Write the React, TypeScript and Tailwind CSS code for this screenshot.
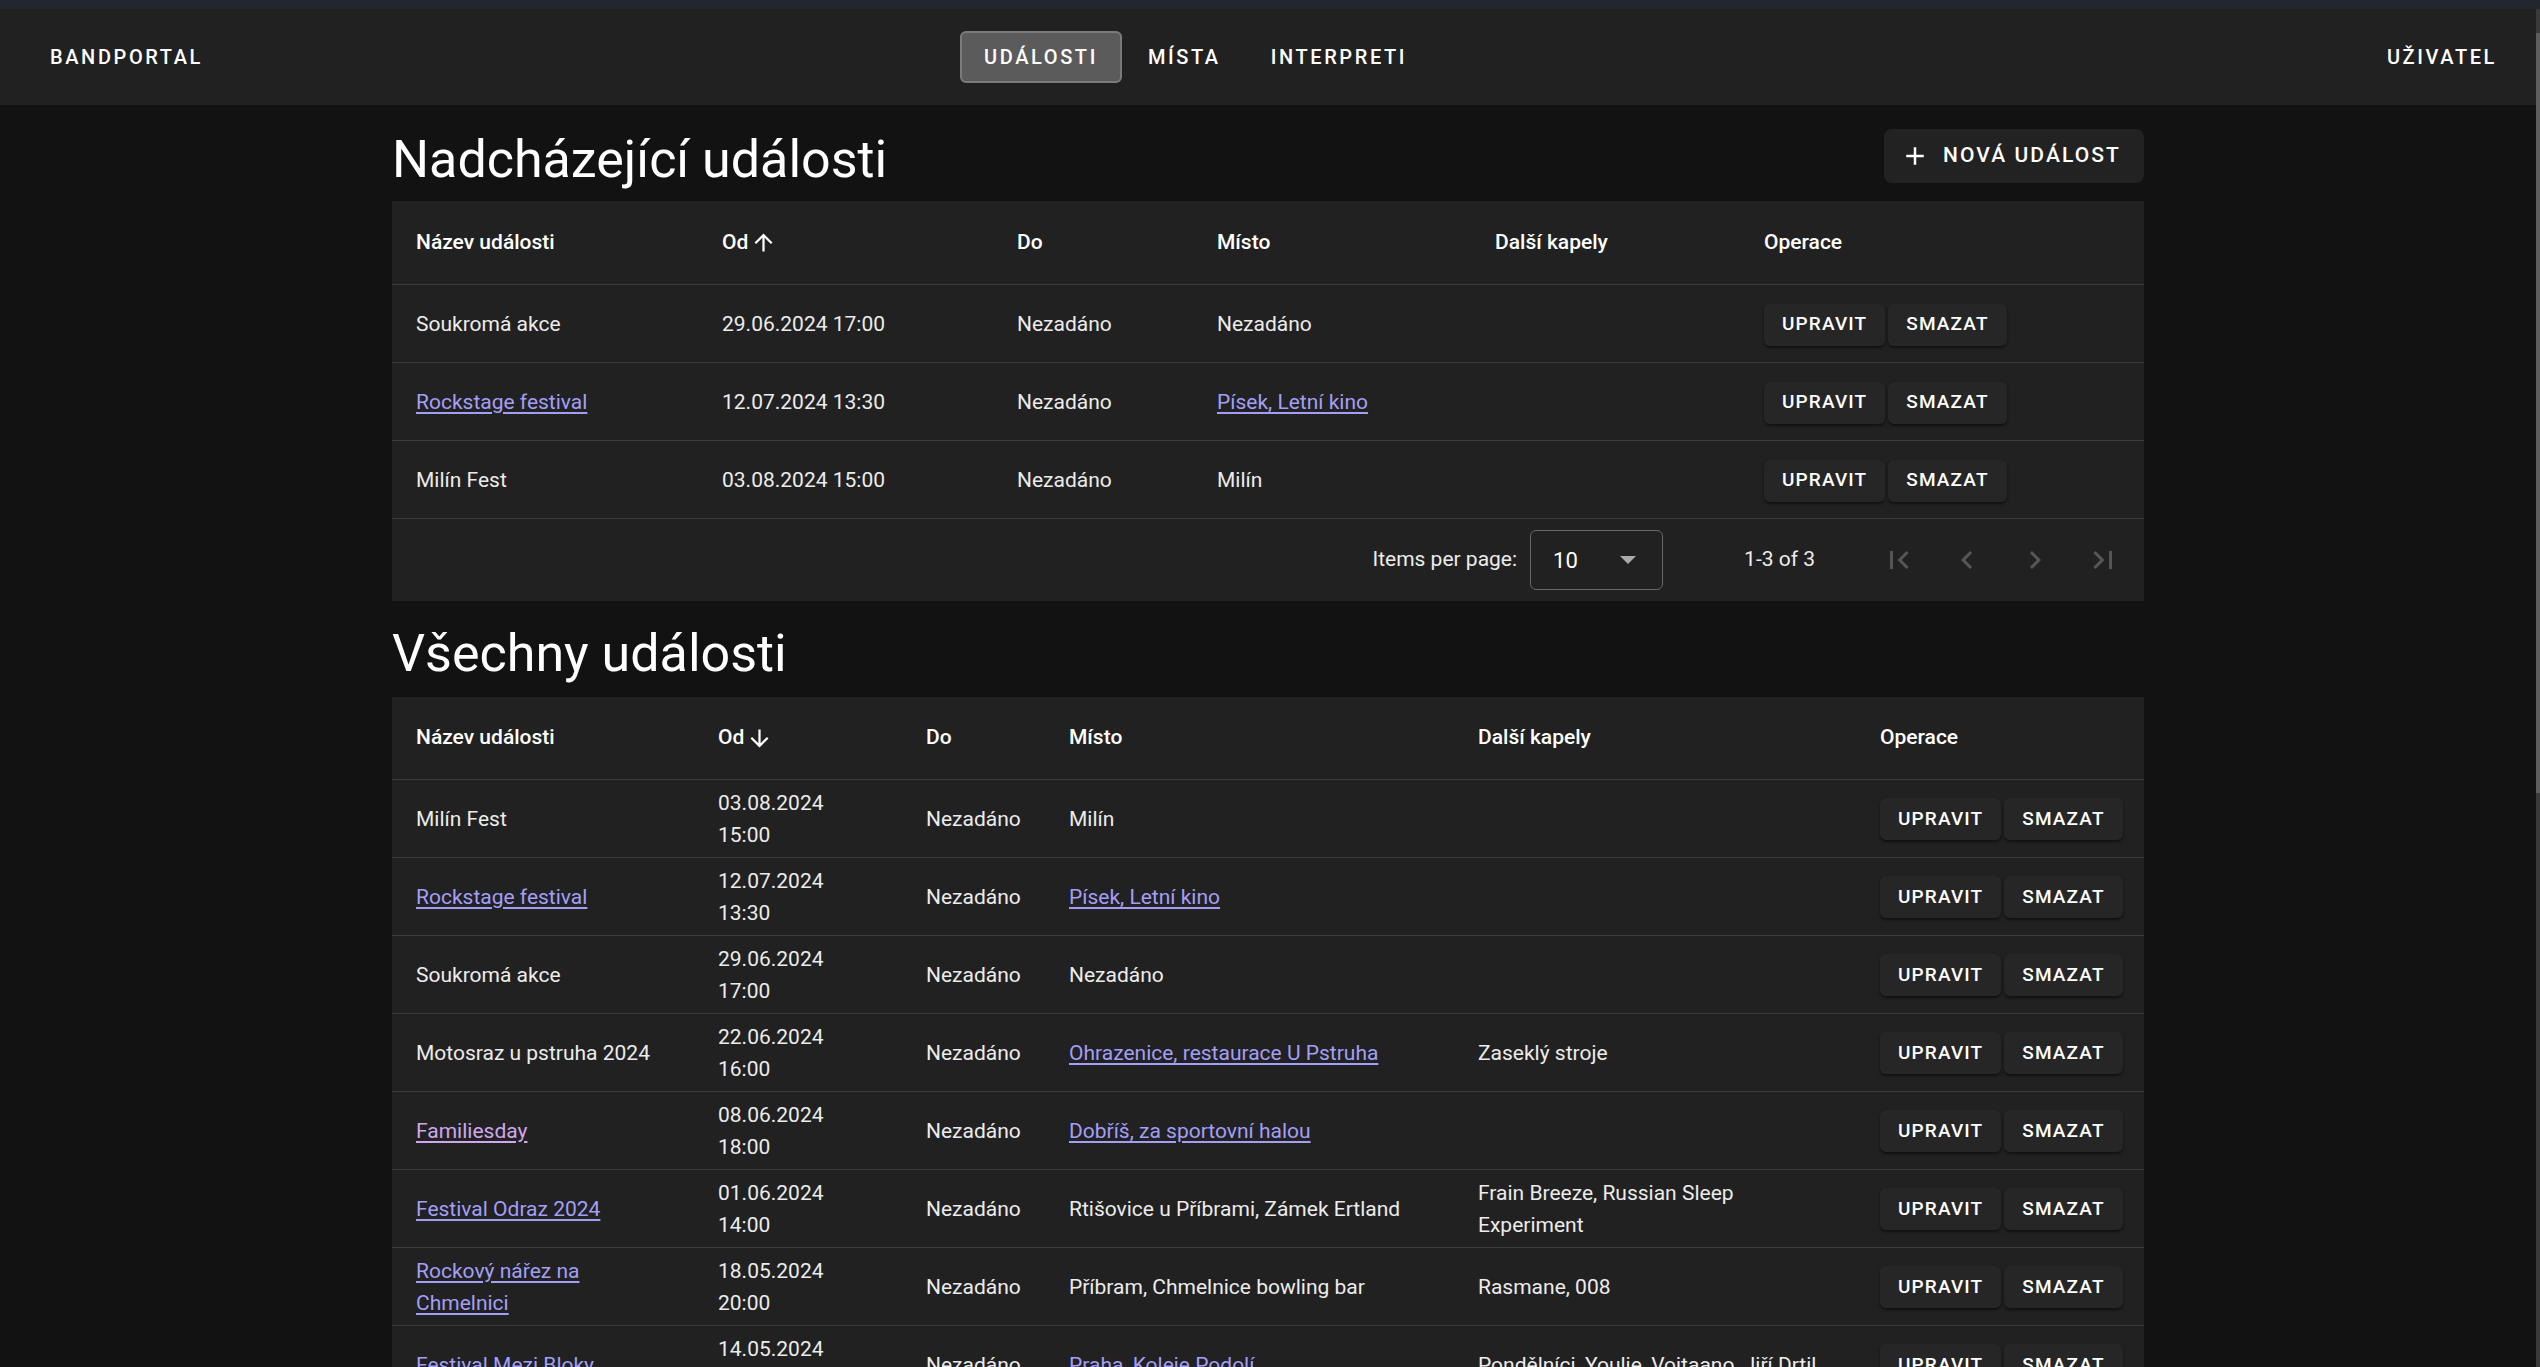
import React from "react";

type Row = {
  name: string;
  nameLink?: "link" | "visited";
  date: string;
  time: string;
  to: string;
  place: string;
  placeLink?: boolean;
  bands: string;
};

const upcoming: Row[] = [
  { name: "Soukromá akce", date: "29.06.2024", time: "17:00", to: "Nezadáno", place: "Nezadáno", bands: "" },
  { name: "Rockstage festival", nameLink: "link", date: "12.07.2024", time: "13:30", to: "Nezadáno", place: "Písek, Letní kino", placeLink: true, bands: "" },
  { name: "Milín Fest", date: "03.08.2024", time: "15:00", to: "Nezadáno", place: "Milín", bands: "" },
];

const all: Row[] = [
  { name: "Milín Fest", date: "03.08.2024", time: "15:00", to: "Nezadáno", place: "Milín", bands: "" },
  { name: "Rockstage festival", nameLink: "link", date: "12.07.2024", time: "13:30", to: "Nezadáno", place: "Písek, Letní kino", placeLink: true, bands: "" },
  { name: "Soukromá akce", date: "29.06.2024", time: "17:00", to: "Nezadáno", place: "Nezadáno", bands: "" },
  { name: "Motosraz u pstruha 2024", date: "22.06.2024", time: "16:00", to: "Nezadáno", place: "Ohrazenice, restaurace U Pstruha", placeLink: true, bands: "Zaseklý stroje" },
  { name: "Familiesday", nameLink: "visited", date: "08.06.2024", time: "18:00", to: "Nezadáno", place: "Dobříš, za sportovní halou", placeLink: true, bands: "" },
  { name: "Festival Odraz 2024", nameLink: "link", date: "01.06.2024", time: "14:00", to: "Nezadáno", place: "Rtišovice u Příbrami, Zámek Ertland", bands: "Frain Breeze, Russian Sleep\nExperiment" },
  { name: "Rockový nářez na\nChmelnici", nameLink: "link", date: "18.05.2024", time: "20:00", to: "Nezadáno", place: "Příbram, Chmelnice bowling bar", bands: "Rasmane, 008" },
  { name: "Festival Mezi Bloky", nameLink: "link", date: "14.05.2024", time: "19:00", to: "Nezadáno", place: "Praha, Koleje Podolí", placeLink: true, bands: "Pondělníci, Youlie, Vojtaano, Jiří Drtil" },
  { name: "Jarní rockování", nameLink: "link", date: "27.04.2024", time: "18:00", to: "Nezadáno", place: "Nezadáno", bands: "" },
];

function Icon({ d, className }: { d: string; className?: string }) {
  return (
    <svg viewBox="0 0 24 24" className={className} fill="currentColor">
      <path d={d} />
    </svg>
  );
}

function Name({ row }: { row: Row }) {
  if (row.nameLink === "link")
    return <a className="whitespace-pre-line text-[#a39ff6] underline decoration-[1.5px] underline-offset-[3px]">{row.name}</a>;
  if (row.nameLink === "visited")
    return <a className="whitespace-pre-line text-[#cfa7ee] underline decoration-[1.5px] underline-offset-[3px]">{row.name}</a>;
  return <span className="whitespace-pre-line">{row.name}</span>;
}

function Place({ row }: { row: Row }) {
  if (row.placeLink)
    return <a className="text-[#a39ff6] underline decoration-[1.5px] underline-offset-[3px]">{row.place}</a>;
  return <span>{row.place}</span>;
}

function Actions() {
  return (
    <div className="flex gap-[3px]">
      <button className="h-[42px] px-[18px] rounded-[6px] bg-[#262626] shadow-[0_2px_3px_rgba(0,0,0,0.5)] text-[19px] font-medium tracking-[0.06em] text-white">UPRAVIT</button>
      <button className="h-[42px] px-[18px] rounded-[6px] bg-[#262626] shadow-[0_2px_3px_rgba(0,0,0,0.5)] text-[19px] font-medium tracking-[0.06em] text-white">SMAZAT</button>
    </div>
  );
}

const ARROW_UP = "M4 12l1.41 1.41L11 7.83V20h2V7.83l5.58 5.59L20 12l-8-8-8 8z";
const ARROW_DOWN = "M20 12l-1.41-1.41L13 16.17V4h-2v12.17l-5.58-5.59L4 12l8 8 8-8z";

function HeaderCells({ arrow }: { arrow: string }) {
  return (
    <>
      <div>Název události</div>
      <div className="flex items-center gap-[2px]">
        Od <Icon d={arrow} className="w-[27px] h-[27px]" />
      </div>
      <div>Do</div>
      <div>Místo</div>
      <div>Další kapely</div>
      <div>Operace</div>
    </>
  );
}

function Paginator() {
  return (
    <div className="flex h-[82px] items-center justify-end pr-[7px] text-[21px] text-[#ececec]">
      <span className="mr-[13px]">Items per page:</span>
      <div className="flex h-[60px] w-[133px] items-center justify-between rounded-[6px] border border-[#666] pl-[22px] pr-[26px]">
        <span className="text-[22px] text-white">10</span>
        <svg viewBox="0 0 10 5" className="h-[8px] w-[16px] text-[#aaa]" fill="currentColor">
          <path d="M0 0l5 5 5-5z" />
        </svg>
      </div>
      <span className="ml-[81px] mr-[50px]">1-3 of 3</span>
      <div className="flex text-[#565656]">
        <div className="flex h-[60px] w-[68px] items-center justify-center"><Icon d="M18.41 16.59L13.82 12l4.59-4.59L17 6l-6 6 6 6zM6 6h2v12H6z" className="h-[36px] w-[36px]" /></div>
        <div className="flex h-[60px] w-[68px] items-center justify-center"><Icon d="M15.41 7.41L14 6l-6 6 6 6 1.41-1.41L10.83 12z" className="h-[36px] w-[36px]" /></div>
        <div className="flex h-[60px] w-[68px] items-center justify-center"><Icon d="M10 6L8.59 7.41 13.17 12l-4.58 4.59L10 18l6-6z" className="h-[36px] w-[36px]" /></div>
        <div className="flex h-[60px] w-[68px] items-center justify-center"><Icon d="M5.59 7.41L10.18 12l-4.59 4.59L7 18l6-6-6-6zM16 6h2v12h-2z" className="h-[36px] w-[36px]" /></div>
      </div>
    </div>
  );
}

export default function App() {
  return (
    <div className="flex h-screen w-full flex-col overflow-hidden bg-[#121212] font-['Roboto',sans-serif] text-[#ececec]">
      <div className="h-[9px] shrink-0 bg-[#22272d]" />
      <div className="flex min-h-0 flex-1">
        <div className="flex min-w-0 flex-1 flex-col">
          {/* top bar */}
          <header className="flex h-[96px] shrink-0 items-center bg-[#212121] pl-[50px] pr-[39px] text-[20px] font-medium tracking-[0.13em] text-white">
            <div className="w-[910px]">BANDPORTAL</div>
            <nav className="flex gap-[2px]">
              <div className="flex h-[52px] items-center rounded-[6px] border-2 border-[#7b7b7b] bg-[#5b5b5b] px-[22px]">UDÁLOSTI</div>
              <div className="flex h-[52px] items-center rounded-[6px] border-2 border-transparent px-[22px]">MÍSTA</div>
              <div className="flex h-[52px] items-center rounded-[6px] border-2 border-transparent px-[22px]">INTERPRETI</div>
            </nav>
            <div className="ml-auto">UŽIVATEL</div>
          </header>

          <main className="mx-auto w-[1752px] text-[21px]">
            {/* upcoming */}
            <div className="mt-[24px] flex h-[72px] items-start justify-between">
              <h1 className="text-[52px] leading-[61px] text-white">Nadcházející události</h1>
              <button className="flex h-[54px] items-center gap-[13px] rounded-[8px] bg-[#222] pl-[16px] pr-[23px] text-[21px] font-medium tracking-[0.1em] text-white">
                <Icon d="M19 13h-6v6h-2v-6H5v-2h6V5h2v6h6v2z" className="h-[30px] w-[30px]" />
                NOVÁ UDÁLOST
              </button>
            </div>
            <div className="bg-[#212121]">
              <div className="grid h-[84px] grid-cols-[306px_295px_200px_278px_269px_1fr] items-center border-b border-[#3a3a3a] px-[24px] font-medium text-white">
                <HeaderCells arrow={ARROW_UP} />
              </div>
              {upcoming.map((r, i) => (
                <div key={i} className="grid h-[78px] grid-cols-[306px_295px_200px_278px_269px_1fr] items-center border-b border-[#3a3a3a] px-[24px] pt-[2px]">
                  <div><Name row={r} /></div>
                  <div>{r.date} {r.time}</div>
                  <div>{r.to}</div>
                  <div><Place row={r} /></div>
                  <div>{r.bands}</div>
                  <Actions />
                </div>
              ))}
              <Paginator />
            </div>

            {/* all */}
            <div className="mt-[22px] flex h-[74px] items-start">
              <h1 className="text-[52px] leading-[61px] text-white">Všechny události</h1>
            </div>
            <div className="bg-[#212121]">
              <div className="grid h-[83px] grid-cols-[302px_208px_143px_409px_402px_1fr] items-center border-b border-[#3a3a3a] px-[24px] font-medium text-white">
                <HeaderCells arrow={ARROW_DOWN} />
              </div>
              {all.map((r, i) => (
                <div key={i} className="grid h-[78px] grid-cols-[302px_208px_143px_409px_402px_1fr] items-center border-b border-[#3a3a3a] px-[24px] leading-[32px]">
                  <div><Name row={r} /></div>
                  <div>
                    <div>{r.date}</div>
                    <div>{r.time}</div>
                  </div>
                  <div>{r.to}</div>
                  <div><Place row={r} /></div>
                  <div className="whitespace-pre-line">{r.bands}</div>
                  <Actions />
                </div>
              ))}
            </div>
          </main>
        </div>
        {/* scrollbar */}
        <div className="flex w-[4px] shrink-0 flex-col bg-[#3a3a3a]">
          <div className="mt-[24px] h-[760px] bg-[#5e5e5e]" />
        </div>
      </div>
    </div>
  );
}
